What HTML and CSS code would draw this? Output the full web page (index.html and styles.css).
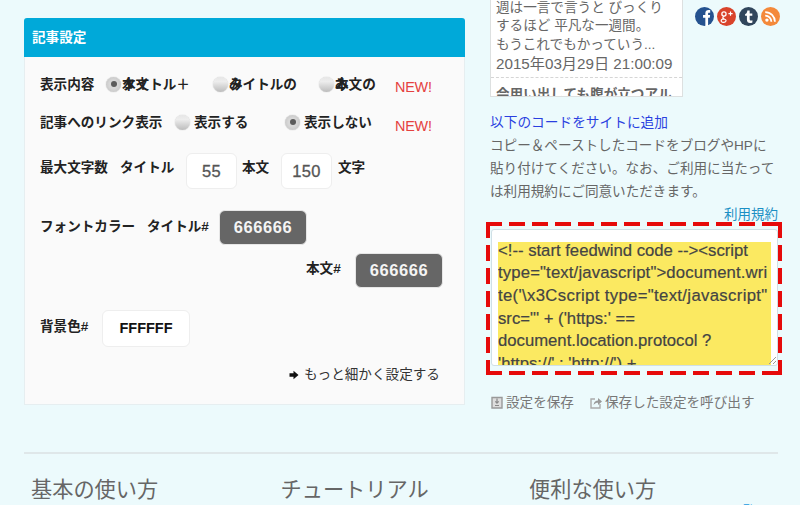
FILE: index.html
```html
<!DOCTYPE html>
<html lang="ja">
<head>
<meta charset="utf-8">
<title>記事設定</title>
<link rel="stylesheet" href="styles.css">
</head>
<body>
<div class="page">
  <div class="columns">
    <section class="panel">
      <h2 class="panel-title">記事設定</h2>
      <div class="panel-body">
        <div class="row row-content">
          <span class="label label-content">表示内容</span>
          <span class="opt opt-a"><i class="radio on"></i><span class="olabel">タイトル＋<span class="over">本文</span></span></span>
          <span class="opt opt-b"><i class="radio"></i><span class="olabel">タイトルの<span class="over">み</span></span></span>
          <span class="opt opt-c"><i class="radio"></i><span class="olabel">本文の<span class="over">み</span></span></span>
          <span class="new">NEW!</span>
        </div>
        <div class="row row-link">
          <span class="label label-link">記事へのリンク表示</span>
          <span class="opt opt-d"><i class="radio"></i><span class="olabel">表示する</span></span>
          <span class="opt opt-e"><i class="radio on"></i><span class="olabel">表示しない</span></span>
          <span class="new">NEW!</span>
        </div>
        <div class="row row-max">
          <span class="label label-max">最大文字数</span>
          <span class="label label-title">タイトル</span>
          <span class="field">55</span>
          <span class="label label-body">本文</span>
          <span class="field">150</span>
          <span class="label label-char">文字</span>
        </div>
        <div class="row row-color">
          <span class="label label-font">フォントカラー</span>
          <span class="label label-hash">タイトル#</span>
          <span class="swatch">666666</span>
        </div>
        <div class="row row-color2">
          <span class="label label-hash2">本文#</span>
          <span class="swatch">666666</span>
        </div>
        <div class="row row-bg">
          <span class="label label-bg">背景色#</span>
          <span class="swatch swatch-white">FFFFFF</span>
        </div>
        <div class="more"><svg class="more-icon" width="10" height="10" viewBox="0 0 10 10"><path d="M0.5 3.2H4.5V0.8L9.5 5L4.5 9.2V6.8H0.5Z" fill="#111"/></svg>もっと細かく設定する</div>
      </div>
    </section>

    <aside class="side">
      <div class="side-top">
        <div class="preview">
          <p class="preview-text">週は一言で言うと びっくり<br>するほど 平凡な一週間。<br>もうこれでもかっていう...<br><span class="date">2015年03月29日 21:00:09</span></p>
          <p class="preview-next">会用い出しても腹が立つアル</p>
        </div>
        <div class="social">
          <svg class="sicon" viewBox="0 0 18 18"><circle cx="9" cy="9" r="9" fill="#25528f"/><path d="M9.8 18V10.3H7.6V7.6H9.8V5.9C9.8 3.9 11 2.9 12.8 2.9H14.4V5.4H13.2C12.5 5.4 12.4 5.8 12.4 6.3V7.6H14.3L14 10.3H12.4V18Z" fill="#fff"/></svg>
          <svg class="sicon" viewBox="0 0 18 18"><circle cx="9" cy="9" r="9" fill="#d9432b"/><circle cx="6.6" cy="6.6" r="2" fill="none" stroke="#fff" stroke-width="1.2"/><path d="M6.8 8.8C5 10 5 10.8 6.8 11.4C8.8 12 9 13 8 14C6.8 14.9 4 14.7 3.9 13.2C3.9 11.8 5.4 11.3 7 11.3" fill="none" stroke="#fff" stroke-width="1.1"/><path d="M12.8 4.2V8.2M10.8 6.2H14.8" stroke="#fff" stroke-width="1.1"/></svg>
          <svg class="sicon" viewBox="0 0 18 18"><circle cx="9" cy="9" r="9" fill="#31465c"/><path d="M7.9 3.2H10.1V6.2H12.6V8.4H10.1V11.4C10.1 12.5 10.6 12.9 11.4 12.9C11.9 12.9 12.3 12.8 12.7 12.5V14.6C12.1 15 11.3 15.2 10.5 15.2C8.6 15.2 7.5 14 7.5 12.1V8.4H5.8V6.7C7 6.3 7.8 5 7.9 3.2Z" fill="#fff"/></svg>
          <svg class="sicon" viewBox="0 0 18 18"><circle cx="9" cy="9" r="9" fill="#f4893a"/><circle cx="5.6" cy="12.4" r="1.6" fill="#fff"/><path d="M4 8.2A5.8 5.8 0 0 1 9.8 14" fill="none" stroke="#fff" stroke-width="1.7"/><path d="M4 4.8A9.2 9.2 0 0 1 13.2 14" fill="none" stroke="#fff" stroke-width="1.7"/></svg>
        </div>
      </div>
      <h3 class="code-head">以下のコードをサイトに追加</h3>
      <p class="code-desc">コピー＆ペーストしたコードをブログやHPに<br>貼り付けてください。なお、ご利用に当たって<br>は利用規約にご同意いただきます。</p>
      <div class="terms">利用規約</div>
      <div class="code-frame">
        <div class="code-box">
          <div class="code-text"><div class="code-lines">&lt;!-- start feedwind code --&gt;&lt;script<br><span class="track-a">type="text/javascript"&gt;document.wri</span><br><span class="track-b">te('\x3Cscript type="text/javascript"</span><br>src="' + ('https:' ==<br>document.location.protocol ?<br>'https://' : 'http://') +</div></div>
          <svg class="grip" width="9" height="9" viewBox="0 0 9 9"><path d="M1 8L8 1M5 8L8 5" stroke="#999" stroke-width="1"/></svg>
        </div>
      </div>
      <div class="actions">
        <span class="action"><svg class="aicon" width="12" height="13" viewBox="0 0 12 13"><path d="M1 1.5H11V12H1Z" fill="#ddd" stroke="#999" stroke-width="1.4"/><path d="M4 9.5H8M6 2.5V7M4.3 5.4L6 7.2L7.7 5.4" fill="none" stroke="#888" stroke-width="1.2"/></svg>設定を保存</span>
        <span class="action"><svg class="aicon" width="12" height="13" viewBox="0 0 12 13"><path d="M5 3H1V12H10V8" fill="none" stroke="#aaa" stroke-width="1.4"/><path d="M3.5 9C4 5.8 6 4.6 8 4.6V2L12 5.6L8 9V6.8C6.2 6.8 4.8 7.4 3.5 9Z" fill="#999"/></svg>保存した設定を呼び出す</span>
      </div>
    </aside>
  </div>

  <hr class="divider">
  <div class="guide">
    <h3 class="guide-title guide-a">基本の使い方</h3>
    <h3 class="guide-title guide-b">チュートリアル</h3>
    <h3 class="guide-title guide-c">便利な使い方</h3>
    <span class="guide-link">一覧へ戻る</span>
  </div>
</div>
</body>
</html>
```
FILE: styles.css
```css
* { box-sizing: border-box; }
html, body { margin: 0; padding: 0; height: 505px; overflow: hidden; }
body {
  background: #ecfafc;
  color: #666;
  font-family: "Liberation Sans", "Noto Sans CJK JP", sans-serif;
}
p, h2, h3 { margin: 0; font-weight: normal; }
.page { width: 800px; height: 505px; padding-left: 24px; overflow: hidden; }
.columns { display: flex; align-items: flex-start; }

/* left panel */
.panel {
  width: 441px;
  margin-top: 18px;
  height: 387px;
  background: #fafafa;
  border: 1px solid #e6eef0;
  border-top: 0;
  border-radius: 3px 3px 0 0;
}
.panel-title {
  height: 39px;
  margin: 0 -1px;
  padding: 0 0 0 8px;
  background: #00a9d9;
  border-radius: 3px 3px 0 0;
  color: #fff;
  font-size: 13.6px;
  font-weight: 700;
  line-height: 39px;
}
.panel-body { padding: 0 0 0 15px; }
.row { display: flex; align-items: flex-start; color: #222; }
.label { font-size: 13.6px; font-weight: 700; line-height: 18px; color: #222; white-space: nowrap; }
.opt { display: flex; align-items: center; font-size: 13.6px; font-weight: 700; color: #222; white-space: nowrap; }
.olabel { position: relative; line-height: 18px; }
.radio {
  flex: none;
  position: relative;
  width: 15px;
  height: 15px;
  margin: -2px 1px 0 0;
  border-radius: 50%;
  background: linear-gradient(#e6e6e6, #ededed 30%, #bcbcbc);
  box-shadow: 0 0 1px #aaa;
}
.radio.on { background: radial-gradient(circle, #d8d8d8 40%, #bdbdbd 100%); }
.radio.on::after {
  content: "";
  position: absolute;
  left: 4.5px;
  top: 4.5px;
  width: 6px;
  height: 6px;
  border-radius: 50%;
  background: #5c5c5c;
}
.over { position: absolute; left: 0; top: 0; }
.new { color: #e5413f; font-size: 14.4px; line-height: 18px; letter-spacing: -0.2px; }

.row-content { margin-top: 19px; height: 20px; }
.label-content { width: 66px; }
.opt-a { width: 107px; }
.opt-b { width: 106px; }
.opt-c { width: 76px; }
.row-content .new { margin-top: 2px; }
.row-link { margin-top: 18px; height: 20px; }
.label-link { width: 135px; }
.opt-d { width: 110px; }
.opt-d .radio, .opt-e .radio { margin-right: 4px; }
.opt-e { width: 110px; }
.row-link .new { margin-top: 3px; }

.row-max { margin-top: 19px; height: 36px; }
.label-max { width: 80px; margin-top: 6px; }
.label-title { width: 66px; margin-top: 6px; }
.field {
  width: 51px;
  height: 36px;
  background: #fff;
  border: 1px solid #eee;
  border-radius: 6px;
  color: #555;
  font-size: 16.5px;
  font-weight: 400;
  line-height: 34px;
  text-align: center;
  letter-spacing: 0.4px;
  -webkit-text-stroke: 0.3px #555;
}
.label-body { width: 39px; margin: 6px 0 0 5px; }
.label-char { margin: 6px 0 0 6px; }

.row-color { margin-top: 21px; height: 35px; }
.label-font { width: 107px; margin-top: 8px; }
.label-hash { width: 72px; margin-top: 8px; }
.swatch {
  width: 88px;
  height: 35px;
  background: #666;
  border: 1px solid #e6e6e6;
  border-radius: 6px;
  color: #f4f4f4;
  font-size: 16.5px;
  font-weight: 700;
  line-height: 33px;
  text-align: center;
  letter-spacing: 0.6px;
}
.row-color2 { margin-top: 8px; height: 35px; }
.label-hash2 { margin: 7px 13px 0 266px; width: 36px; }
.row-bg { margin-top: 22px; height: 37px; }
.label-bg { width: 62px; margin-top: 8px; }
.swatch-white {
  height: 37px;
  background: #fff;
  border-color: #eee;
  color: #111;
  font-size: 14.5px;
  line-height: 35px;
  letter-spacing: 0;
}
.more {
  display: flex;
  align-items: center;
  margin: 19px 0 0 249px;
  font-size: 13.6px;
  line-height: 18px;
  color: #333;
  white-space: nowrap;
}
.more-icon { margin-right: 5px; }

/* right column */
.side { width: 290px; margin-left: 25px; }
.side-top { display: flex; align-items: flex-start; height: 97px; }
.preview {
  width: 193px;
  height: 97px;
  overflow: hidden;
  background: #fff;
  border: 1px solid #dde0e0;
  border-top: 0;
  padding: 0 0 0 5px;
  color: #666;
  font-size: 13.6px;
  line-height: 18.4px;
}
.preview-text { height: 79px; margin: -1px -5px 0 -5px; padding: 0 0 0 5px; border-bottom: 1px dashed #d5d5d5; white-space: nowrap; }
.date { font-size: 15.2px; position: relative; top: 1px; }
.preview-next { margin-top: 8px; font-weight: 700; white-space: nowrap; }
.social { display: flex; gap: 3px; margin: 7px 0 0 12px; }
.sicon { width: 19px; height: 19px; display: block; }

.code-head { margin-top: 16px; color: #2a3fe0; font-size: 13.7px; line-height: 20px; white-space: nowrap; }
.code-desc { margin-top: 1px; color: #666; font-size: 13.6px; line-height: 23.2px; white-space: nowrap; }
.terms { margin-top: 2px; width: 288px; text-align: right; color: #1b8fc4; font-size: 13.5px; line-height: 18px; }
.code-frame {
  width: 296px;
  height: 153px;
  margin: -2px 0 0 -4px;
  padding: 7px 4px 9px 5px;
  background:
    repeating-linear-gradient(90deg, #e60a0a 0 16px, transparent 16px 23px) left top / 100% 4px no-repeat,
    repeating-linear-gradient(90deg, #e60a0a 0 16px, transparent 16px 23px) left bottom / 100% 4px no-repeat,
    repeating-linear-gradient(180deg, #e60a0a 0 16px, transparent 16px 23px) left top / 4px 100% no-repeat,
    repeating-linear-gradient(180deg, #e60a0a 0 16px, transparent 16px 23px) right top / 4px 100% no-repeat;
}
.code-box {
  position: relative;
  height: 137px;
  overflow: hidden;
  background: #fff;
  border: 1px solid #cfe0e6;
  border-radius: 3px;
  padding: 12px 6px 0 6px;
}
.code-text {
  height: 124px;
  overflow: hidden;
  background: #fbe961;
  color: #444;
  font-size: 16.7px;
  line-height: 22.7px;
  -webkit-text-stroke: 0.2px #444;
}
.code-lines { margin-top: -2px; white-space: nowrap; }
.track-a { letter-spacing: 0.15px; }
.track-b { letter-spacing: 0.35px; }
.grip { position: absolute; right: 0; bottom: 0; }
.actions { display: flex; gap: 16px; margin: 19px 0 0 1px; color: #777; font-size: 13.6px; line-height: 18px; white-space: nowrap; }
.action { display: flex; align-items: center; }
.aicon { margin-right: 3px; }

/* footer */
.divider { width: 754px; height: 0; margin: 40px 0 0; border: 0; border-top: 2px solid #dfe7e9; }
.guide { display: flex; position: relative; margin-top: 22px; }
.guide-title { color: #666; font-size: 21.2px; line-height: 28px; white-space: nowrap; }
.guide-a { margin-left: 7px; width: 249.5px; }
.guide-b { width: 248.5px; }
.guide-link { position: absolute; left: 705px; top: 24px; color: #1b9be0; font-size: 13.5px; white-space: nowrap; }
```
